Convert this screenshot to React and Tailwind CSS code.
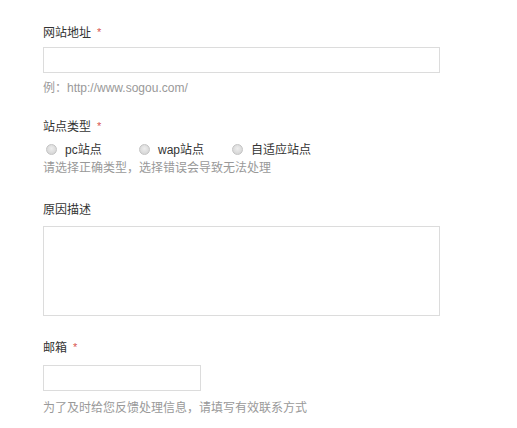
import React from "react";

const font = { fontFamily: '"Liberation Sans", "Noto Sans CJK SC", sans-serif' };

function Star() {
  return <span className="ml-[6px] text-[11px] text-[#d9534f] relative top-[-1px]">*</span>;
}

function Radio({ label }) {
  return (
    <label className="w-[93px] flex items-center">
      <span className="w-[11px] h-[11px] rounded-full border border-[#c4c4c4] bg-[radial-gradient(circle_at_50%_40%,#eeeeee,#cfcfcf)]"></span>
      <span className="ml-[8px] text-[12px] text-[#333]">{label}</span>
    </label>
  );
}

export default function App() {
  return (
    <div className="w-[517px] h-[428px] bg-white pl-[43px] pt-[24px] flex flex-col text-[12px] leading-[18px]" style={font}>
      <div className="text-[#333] flex items-center h-[18px]">网站地址<Star /></div>
      <div className="mt-[5px] w-[397px] h-[26px] border border-[#dcdcdc]"></div>
      <div className="mt-[6px] text-[#999]">例：http://www.sogou.com/</div>

      <div className="mt-[21px] text-[#333] flex items-center h-[18px]">站点类型<Star /></div>
      <div className="mt-[5px] h-[17px] flex items-center pl-[3px]">
        <Radio label="pc站点" />
        <Radio label="wap站点" />
        <Radio label="自适应站点" />
      </div>
      <div className="mt-[1px] text-[#999]">请选择正确类型，选择错误会导致无法处理</div>

      <div className="mt-[24px] text-[#333]">原因描述</div>
      <div className="mt-[7px] w-[397px] h-[90px] border border-[#dcdcdc]"></div>

      <div className="mt-[23px] text-[#333] flex items-center h-[18px]">邮箱<Star /></div>
      <div className="mt-[8px] w-[158px] h-[26px] border border-[#dcdcdc]"></div>
      <div className="mt-[8px] text-[#999]">为了及时给您反馈处理信息，请填写有效联系方式</div>
    </div>
  );
}
